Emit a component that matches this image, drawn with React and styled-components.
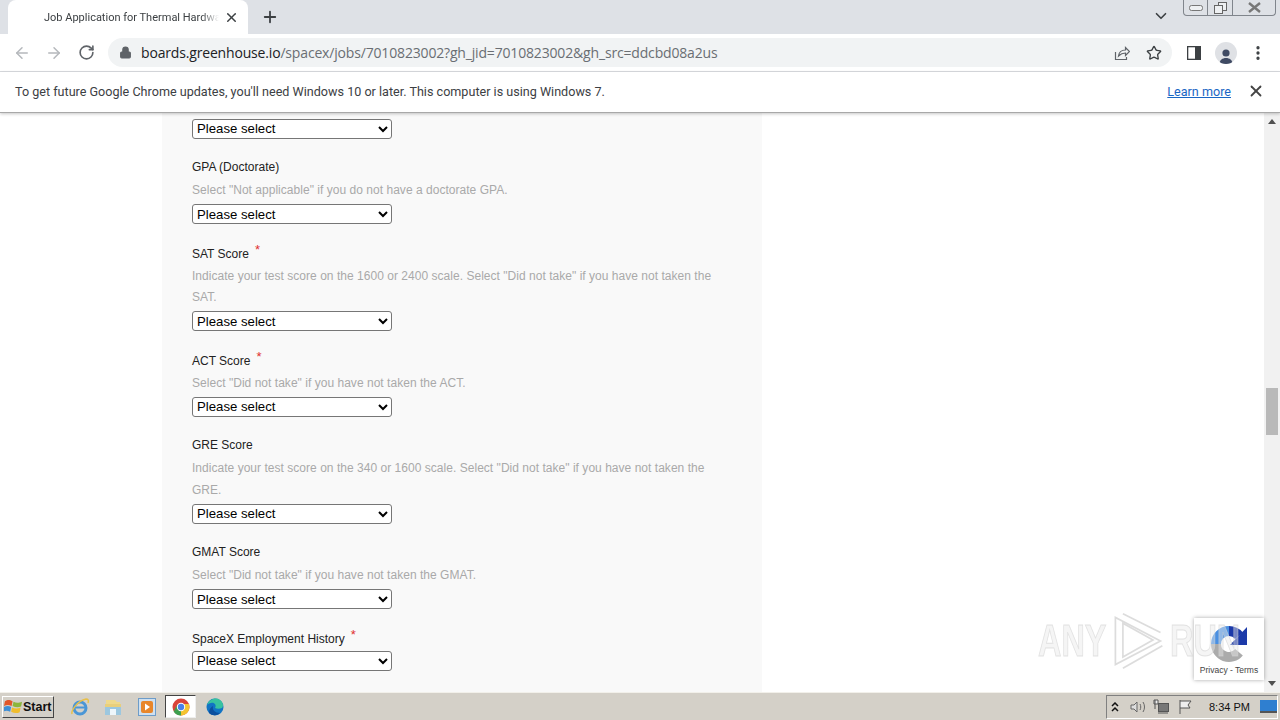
import React from "react";
import styled, { createGlobalStyle } from "styled-components";
import { ArrowLeft, ArrowRight, RotateCw, Lock, Star, X, Plus, ChevronDown, EllipsisVertical } from "lucide-react";

const Global = createGlobalStyle`
  html, body { margin: 0; padding: 0; height: 100%; overflow: hidden; }
  * { box-sizing: border-box; }
`;
const Shell = styled.div`
  width: 1280px; height: 720px; display: flex; flex-direction: column; position: relative;
  font-family: "Open Sans", "Liberation Sans", sans-serif; background: #fff; overflow: hidden;
`;
const TabStrip = styled.div`
  height: 34px; flex: none; background: #dee1e6; display: flex; align-items: stretch; padding-left: 8px; position: relative;
`;
const Tab = styled.div`
  width: 240px; background: #fff; border-radius: 8px 8px 0 0; display: flex; align-items: center;
  padding-left: 36px; padding-right: 9px; color: #3c4043; font-family: Roboto, sans-serif; font-size: 11px; white-space: nowrap;
`;
const TabTitle = styled.span`
  width: 175px; overflow: hidden; flex: none;
  -webkit-mask-image: linear-gradient(90deg, #000 90%, transparent);
  mask-image: linear-gradient(90deg, #000 90%, transparent);
`;
const TabClose = styled.span` display: flex; color: #3c4043; margin-left: auto; `;
const NewTab = styled.span` display: flex; align-items: center; margin-left: 13px; color: #3c4043; `;
const StripChevron = styled.span` position: absolute; left: 1152px; top: 7px; display: flex; color: #3c4043; `;
const WindowControls = styled.div`
  position: absolute; left: 1183px; top: 0; width: 93px; height: 16px; display: flex;
  border: 1px solid #80858c; border-top: 0; border-radius: 0 0 4px 4px;
`;
const WinButton = styled.div`
  width: ${p => p.$w}px; display: flex; align-items: center; justify-content: center; border-right: ${p => p.$last ? "0" : "1px solid #80858c"};
`;
const Toolbar = styled.div`
  height: 38px; flex: none; background: #fff; display: flex; align-items: center; padding-left: 12px; border-bottom: 1px solid #dadce0;
`;
const NavIcon = styled.span`
  width: 20px; margin-right: ${p => p.$mr ?? 12}px; display: flex; justify-content: center; color: ${p => p.$c || "#5f6368"};
`;
const Omnibox = styled.div`
  width: 1064px; height: 29px; background: #f1f3f4; border-radius: 15px; display: flex; align-items: center; padding-left: 11px; margin-right: 15px;
`;
const Url = styled.div`
  margin-left: 9px; font-size: 14px; color: #6a6e73; white-space: nowrap; flex: 1; letter-spacing: -0.17px;
  b { font-weight: 400; color: #202124; }
`;
const OmniIcon = styled.span` display: flex; margin-right: ${p => p.$mr}px; color: #5f6368; `;
const Avatar = styled.span`
  width: 22px; height: 22px; border-radius: 50%; background: #dfe1e5; display: flex; align-items: flex-end; justify-content: center; overflow: hidden; margin-left: -1px; margin-right: 12px;
`;
const Infobar = styled.div`
  height: 41px; flex: none; background: #fff; border-bottom: 1px solid #a8a8a8; box-shadow: 0 1px 3px rgba(0,0,0,.22);
  display: flex; align-items: center; padding: 0 15px 2px; font-family: Roboto, sans-serif; font-size: 12.6px; color: #3c4043; position: relative; z-index: 2;
`;
const InfoText = styled.span` flex: 1; `;
const LearnMore = styled.a` color: #1a66c4; text-decoration: underline; margin-right: 16px; `;
const InfoClose = styled.span` display: flex; color: #444; `;
const Viewport = styled.div` flex: 1; min-height: 0; display: flex; overflow: hidden; `;
const Page = styled.div` flex: 1; background: #fff; padding-left: 162px; overflow: hidden; `;
const Panel = styled.div`
  width: 600px; min-height: 100%; background: #f9f9f9; padding: 5.9px 30px 0;
  font-family: "Liberation Sans", Arial, sans-serif;
`;
const Field = styled.div` margin-bottom: 18.6px; `;
const Label = styled.div`
  font-size: 12px; line-height: 21.6px; height: 21.6px; color: #222; margin-bottom: 1.4px;
`;
const Required = styled.span` color: #e03030; font-size: 13px; margin-left: 6px; position: relative; top: -4px; `;
const Hint = styled.div`
  font-size: 12px; line-height: 21.6px; color: #a9a9a9; margin-bottom: 2.25px; width: 540px; letter-spacing: 0.03px;
`;
const Select = styled.select`
  display: block; width: 200px; height: 20px; font-family: "Liberation Sans", Arial, sans-serif; font-size: 13.2px; color: #000;
  background: #fff; border: 1px solid #767676; border-radius: 3px; padding: 0;
`;
const Scrollbar = styled.div`
  width: 16px; flex: none; background: #f1f1f1; display: flex; flex-direction: column; align-items: center; padding-top: 6px;
`;
const Thumb = styled.div` width: 12px; height: 47px; background: #b9b9b9; margin-top: 264px; `;
const ArrowUp = styled.div` width: 0; height: 0; border-left: 4px solid transparent; border-right: 4px solid transparent; border-bottom: 5px solid #505050; `;
const ArrowDown = styled.div` width: 0; height: 0; border-left: 4px solid transparent; border-right: 4px solid transparent; border-top: 5px solid #505050; margin-top: auto; margin-bottom: 6px; `;
const Watermark = styled.div`
  position: absolute; left: 1038px; top: 610px; height: 62px; display: flex; align-items: center; gap: 3px;
  font-family: "Liberation Sans", sans-serif; font-weight: 700; font-size: 45px; color: rgba(232,232,232,.45); -webkit-text-stroke: 1px rgba(210,210,210,.6); pointer-events: none; z-index: 5;
`;
const WmText = styled.span` display: inline-block; transform: scaleX(.72); transform-origin: left center; width: ${p => p.$w}px; `;
const Badge = styled.div`
  position: absolute; left: 1194px; top: 618px; width: 70px; height: 62px; background: #fff; box-shadow: 0 0 4px rgba(0,0,0,.35);
  display: flex; flex-direction: column; align-items: center; padding-top: 6px; font-family: "Liberation Sans", sans-serif; font-size: 8.5px; color: #444; z-index: 4;
`;
const BadgeLinks = styled.div` margin-top: 1px; white-space: nowrap; `;
const Taskbar = styled.div`
  height: 28px; flex: none; background: #d4d0c8; border-top: 1px solid #f2f0ea; display: flex; align-items: center; padding-left: 2px; position: relative; z-index: 3;
`;
const StartBtn = styled.div`
  width: 52px; height: 22px; display: flex; align-items: center; gap: 0; padding-left: 1px; font-family: "Liberation Sans", sans-serif; font-weight: 700; font-size: 12.5px; color: #111;
  border: 1px solid; border-color: #fff #444 #444 #fff; background: #d4d0c8;
`;
const TaskIcon = styled.div`
  width: ${p => p.$w || 24}px; height: 24px; margin-left: ${p => p.$ml}px; display: flex; align-items: center; justify-content: center;
  ${p => p.$active && "background:#fff; border:1px solid; border-color:#444 #eee #eee #444; height:23px;"}
`;
const Tray = styled.div`
  margin-left: auto; margin-right: 2px; width: 172px; height: 24px; border: 1px solid; border-color: #808080 #fff #fff #808080; display: flex; align-items: center;
`;
const TrayItem = styled.span` display: flex; align-items: center; margin-left: ${p => p.$ml}px; `;
const Clock = styled.span` font-family: "Liberation Sans", sans-serif; font-size: 11px; color: #111; margin-left: ${p => p.$ml}px; white-space: nowrap; `;

const Pick = () => <Select defaultValue="x"><option value="x">Please select</option></Select>;

const fields = [
  { label: "GPA (Doctorate)", hint: 'Select "Not applicable" if you do not have a doctorate GPA.' },
  { label: "SAT Score", req: true, hint: 'Indicate your test score on the 1600 or 2400 scale. Select "Did not take" if you have not taken the SAT.' },
  { label: "ACT Score", req: true, hint: 'Select "Did not take" if you have not taken the ACT.' },
  { label: "GRE Score", hint: 'Indicate your test score on the 340 or 1600 scale. Select "Did not take" if you have not taken the GRE.' },
  { label: "GMAT Score", hint: 'Select "Did not take" if you have not taken the GMAT.' },
  { label: "SpaceX Employment History", req: true },
];

const Share = () => (
  <svg width="16" height="16" viewBox="0 0 16 16" fill="none" stroke="#5f6368" strokeWidth="1.2">
    <path d="M1.5 7v7.5h11V12" /><path d="M4.5 11c.5-4 3.5-6 7-6V2.5l4 4-4 4V8c-3 0-5 1-7 3z" />
  </svg>
);
const SidePanel = () => (
  <svg width="14" height="14" viewBox="0 0 14 14"><rect x="0.5" y="0.5" width="13" height="13" fill="#fff" stroke="#3c4043" strokeWidth="1.6" /><rect x="8" y="0" width="6" height="14" fill="#3c4043" /></svg>
);
const Person = () => (
  <svg width="16" height="17" viewBox="0 0 16 17" fill="#3f4a63"><circle cx="8" cy="6" r="3.6" /><path d="M1.5 17c0-4 3-6 6.5-6s6.5 2 6.5 6z" /></svg>
);
const WinLogo = () => (
  <svg width="19" height="17" viewBox="0 0 20 17">
    <path d="M1 3c3-2 5-1.5 8 0L8 8C5 6.500 3 6.500 0 8z" fill="#e2572a" />
    <path d="M10 3.500c3 1.500 5 1.500 9 0l-1 5c-3 1.300-6 1-9-.5z" fill="#8cb63c" />
    <path d="M0 9c3-1.500 5-1.500 7.500 0l-1 5c-3-1.500-5-1.500-7.500 0z" fill="#3f8fd6" />
    <path d="M8.500 9.500c3 1.500 5.500 1.500 9 0l-1 5c-3 1.500-6 1.200-9-.5z" fill="#f0bd2c" />
  </svg>
);
const IE = () => (
  <svg width="20" height="20" viewBox="0 0 20 20" fill="none">
    <circle cx="10" cy="11" r="6" stroke="#4a96d6" strokeWidth="3" />
    <path d="M5 10.500h10" stroke="#4a96d6" strokeWidth="2" />
    <path d="M2 17c-1-3 5-13 14-15 2 0 3 1 2 4" stroke="#e8c04a" strokeWidth="1.500" />
  </svg>
);
const Folder = () => (
  <svg width="20" height="20" viewBox="0 0 20 20">
    <path d="M3 3h9l2 2h3v5H3z" fill="#efd98c" /><path d="M2 7h16v11H2z" fill="#9cc7df" /><path d="M2 7h16v3H2z" fill="#e9cf7b" /><rect x="7" y="12" width="6" height="6" fill="#eef6fb" />
  </svg>
);
const Media = () => (
  <svg width="20" height="20" viewBox="0 0 20 20">
    <rect x="1.500" y="1.500" width="17" height="17" fill="#cfe0f0" stroke="#6d9cc9" /><rect x="4" y="4" width="12" height="12" rx="2" fill="#e8862a" /><path d="M8 6.500l5 3.500-5 3.500z" fill="#fff" />
  </svg>
);
const ChromeLogo = () => (
  <svg width="18" height="18" viewBox="0 0 18 18">
    <circle cx="9" cy="9" r="8.500" fill="#d9443a" />
    <path d="M9 9L1.600 13.200A8.500 8.500 0 0 0 9 17.500z" fill="#3ea04f" />
    <path d="M9 9v8.500A8.500 8.500 0 0 0 16.900 6H9z" fill="#f4c430" />
    <path d="M1.600 13.200L5.300 7 9 9z" fill="#3ea04f" />
    <circle cx="9" cy="9" r="4.200" fill="#fff" /><circle cx="9" cy="9" r="3.200" fill="#4a80e8" />
  </svg>
);
const Edge = () => (
  <svg width="20" height="20" viewBox="0 0 20 20">
    <circle cx="10" cy="10" r="8.500" fill="#1173c4" />
    <path d="M2 8c2-6 9-8 13-5 3 2 4 6 2 8-2 1-5 1-7 0 2-3-1-6-4-5-2 0-3 1-4 2z" fill="#37c2a0" />
    <path d="M8 9c-1 4 2 7 7 7-3 3-8 3-11 0 0-4 2-6 4-7z" fill="#0c4f9e" />
  </svg>
);
const Recaptcha = () => (
  <svg width="40" height="40" viewBox="0 0 40 40" fill="none">
    <path d="M7 20A13 13 0 0 0 30 28.300" stroke="#ababab" strokeWidth="10" />
    <path d="M7 20A13 13 0 0 1 20 7" stroke="#4a90e2" strokeWidth="10" />
    <path d="M20 7A13 13 0 0 1 30 11.700" stroke="#1c3aa9" strokeWidth="10" />
    <path d="M38 3v18H21z" fill="#1c3aa9" />
  </svg>
);
const Tri = () => (
  <svg width="60" height="62" viewBox="0 0 62 66" fill="none" stroke="rgba(205,205,205,.7)" strokeWidth="1.800">
    <path d="M8 8v50l48-25z" /><path d="M16 4L56 24" /><path d="M16 14v36l32-18z" /><path d="M16 62L58 38" />
  </svg>
);

export default function App() {
  return (
    <Shell>
      <Global />
      <TabStrip>
        <Tab>
          <TabTitle>Job Application for Thermal Hardware</TabTitle>
          <TabClose><X size={15} strokeWidth={2.4} /></TabClose>
        </Tab>
        <NewTab><Plus size={18} strokeWidth={2.4} /></NewTab>
        <StripChevron><ChevronDown size={18} strokeWidth={2.2} /></StripChevron>
        <WindowControls>
          <WinButton $w={24}><svg width="14" height="6"><rect x=".5" y=".5" width="13" height="5" rx="2" fill="#eef0f2" stroke="#777" /></svg></WinButton>
          <WinButton $w={25}><svg width="13" height="12" fill="#eef0f2" stroke="#666"><rect x="4.500" y=".5" width="8" height="8" /><rect x=".5" y="3.500" width="8" height="8" /></svg></WinButton>
          <WinButton $w={42} $last><svg width="13" height="11" stroke="#777" strokeWidth="2.400"><path d="M1 1l11 9M12 1L1 10" /></svg></WinButton>
        </WindowControls>
      </TabStrip>
      <Toolbar>
        <NavIcon $c="#b5b8bc"><ArrowLeft size={18} /></NavIcon>
        <NavIcon $c="#b5b8bc"><ArrowRight size={18} /></NavIcon>
        <NavIcon $mr={12}><RotateCw size={17} strokeWidth={2.300} /></NavIcon>
        <Omnibox>
          <OmniIcon $mr={0}><Lock size={13} fill="#5f6368" /></OmniIcon>
          <Url><b>boards.greenhouse.io</b>/spacex/jobs/7010823002?gh_jid=7010823002&amp;gh_src=ddcbd08a2us</Url>
          <OmniIcon $mr={16}><Share /></OmniIcon>
          <OmniIcon $mr={10}><Star size={16} strokeWidth={2} color="#3c4043" /></OmniIcon>
        </Omnibox>
        <OmniIcon $mr={15}><SidePanel /></OmniIcon>
        <Avatar><Person /></Avatar>
        <OmniIcon $mr={0}><EllipsisVertical size={18} strokeWidth={2.400} color="#3c4043" /></OmniIcon>
      </Toolbar>
      <Infobar>
        <InfoText>To get future Google Chrome updates, you'll need Windows 10 or later. This computer is using Windows 7.</InfoText>
        <LearnMore>Learn more</LearnMore>
        <InfoClose><X size={18} strokeWidth={2.400} /></InfoClose>
      </Infobar>
      <Viewport>
        <Page>
          <Panel>
            <Field><Pick /></Field>
            {fields.map(f => (
              <Field key={f.label}>
                <Label>{f.label}{f.req && <Required>*</Required>}</Label>
                {f.hint && <Hint>{f.hint}</Hint>}
                <Pick />
              </Field>
            ))}
          </Panel>
        </Page>
        <Scrollbar>
          <ArrowUp />
          <Thumb />
          <ArrowDown />
        </Scrollbar>
      </Viewport>
      <Taskbar>
        <StartBtn><WinLogo />Start</StartBtn>
        <TaskIcon $ml={14}><IE /></TaskIcon>
        <TaskIcon $ml={9}><Folder /></TaskIcon>
        <TaskIcon $ml={10}><Media /></TaskIcon>
        <TaskIcon $ml={6} $w={31} $active><ChromeLogo /></TaskIcon>
        <TaskIcon $ml={7}><Edge /></TaskIcon>
        <Tray>
          <TrayItem $ml={4}><svg width="8" height="10" fill="none" stroke="#111" strokeWidth="1.500"><path d="M1 4l3-3 3 3M1 9l3-3 3 3" /></svg></TrayItem>
          <TrayItem $ml={11}><svg width="16" height="14" fill="none" stroke="#666"><path d="M1 5h3l3-3v10L4 9H1z" fill="#ddd" /><path d="M10 4c1 2 1 4 0 6M13 2c2 3 2 7 0 10" /></svg></TrayItem>
          <TrayItem $ml={7}><svg width="16" height="15" fill="#777" stroke="#555"><rect x="5.500" y="4.500" width="10" height="8" /><path d="M2 1v9M1 1h4v4H1z" fill="#eee" /><path d="M5 14h10" /></svg></TrayItem>
          <TrayItem $ml={9}><svg width="15" height="15" fill="#eee" stroke="#555"><path d="M2 1v14M2 2h11l-3 4 2 3H2" /></svg></TrayItem>
          <Clock $ml={16}>8:34 PM</Clock>
          <TrayItem $ml={10}><svg width="17" height="13"><rect width="17" height="11" fill="#2f7fd0" /><rect y="11" width="17" height="2" fill="#555" /></svg></TrayItem>
        </Tray>
      </Taskbar>
      <Badge><Recaptcha /><BadgeLinks>Privacy - Terms</BadgeLinks></Badge>
      <Watermark>
        <WmText $w={66}>ANY</WmText>
        <Tri />
        <WmText $w={70}>RUN</WmText>
      </Watermark>
    </Shell>
  );
}
